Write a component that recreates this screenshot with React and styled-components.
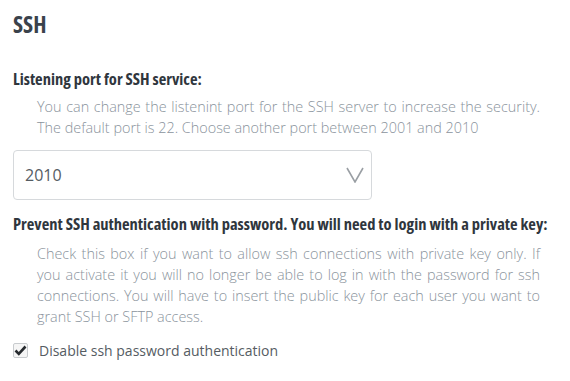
import React from "react"
import styled, { createGlobalStyle } from "styled-components"

const GlobalStyle = createGlobalStyle`
  html, body {
    margin: 0;
    padding: 0;
    background: #fff;
  }
  body {
    font-family: "Open Sans", "Liberation Sans", sans-serif;
    color: #3a424b;
  }
`

const Container = styled.div`
  padding: 9px 13px 0 13px;
  width: 544px;
`

const Title = styled.h2`
  font-family: "Open Sans", sans-serif;
  font-stretch: 75%;
  font-weight: 700;
  font-size: 23px;
  line-height: 30px;
  color: #3a424b;
  margin: 0 0 29px 0;
`

const Label = styled.h4`
  font-family: "Open Sans", sans-serif;
  font-stretch: 75%;
  font-weight: 700;
  font-size: 16.5px;
  line-height: 22px;
  color: #2f363d;
  margin: 0 0 ${p => p.$gap || 7}px 0;
  white-space: nowrap;
`

const Help = styled.p`
  font-weight: 300;
  font-size: 14.4px;
  line-height: 21px;
  color: #8a939c;
  margin: 0 0 ${p => p.$gap || 14}px 24px;
  padding-right: 17px;
  text-align: justify;
`

const SelectBox = styled.div`
  display: flex;
  align-items: center;
  justify-content: space-between;
  width: 359px;
  height: 50px;
  box-sizing: border-box;
  border: 1px solid #d6d9dc;
  border-radius: 4px;
  padding: 0 7px 0 11px;
  margin-bottom: 13px;
`

const SelectValue = styled.span`
  font-size: 16px;
  color: #555c63;
`

const Chevron = styled.svg`
  width: 18px;
  height: 16px;
`

const CheckRow = styled.label`
  display: flex;
  align-items: center;
  gap: 11px;
  font-size: 14px;
  font-weight: 400;
  color: #555c63;
`

const CheckBox = styled.span`
  display: flex;
  align-items: center;
  justify-content: center;
  width: 15px;
  height: 15px;
  box-sizing: border-box;
  border: 1px solid #c8cbce;
  border-radius: 2px;
  background: #f5f5f5;
`

export default function App() {
  return (
    <>
      <GlobalStyle />
      <Container>
        <Title>SSH</Title>

        <Label $gap={6}>Listening port for SSH service:</Label>
        <Help $gap={12}>
          You can change the listenint port for the SSH server to increase the security.
          The default port is 22. Choose another port between 2001 and 2010
        </Help>

        <SelectBox>
          <SelectValue>2010</SelectValue>
          <Chevron viewBox="0 0 18 16">
            <path d="M1 1 L9 15 L17 1" fill="none" stroke="#9a9fa4" strokeWidth="1.6" />
          </Chevron>
        </SelectBox>

        <Label $gap={8}>Prevent SSH authentication with password. You will need to login with a private key:</Label>
        <Help $gap={14}>
          Check this box if you want to allow ssh connections with private key only. If you
          activate it you will no longer be able to log in with the password for ssh
          connections. You will have to insert the public key for each user you want to
          grant SSH or SFTP access.
        </Help>

        <CheckRow>
          <CheckBox>
            <svg width="13" height="11" viewBox="0 0 13 11">
              <path d="M1.5 5.5 L4.8 8.8 L11.5 1.5" fill="none" stroke="#262a2e" strokeWidth="2.6" />
            </svg>
          </CheckBox>
          Disable ssh password authentication
        </CheckRow>
      </Container>
    </>
  )
}
